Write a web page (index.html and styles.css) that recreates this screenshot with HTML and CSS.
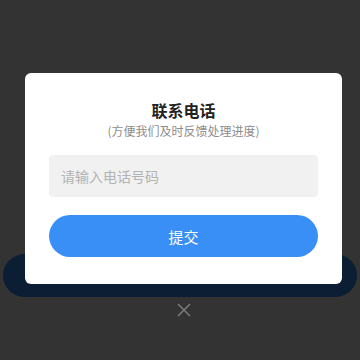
FILE: index.html
```html
<!DOCTYPE html>
<html lang="zh-CN">
<head>
  <meta charset="UTF-8">
  <meta name="viewport" content="width=device-width, initial-scale=1.0">
  <title>联系电话</title>
  <link rel="stylesheet" href="styles.css">
</head>
<body>
  <div class="page">
    <div class="page-bar"></div>
  </div>

  <div class="mask">
    <div class="dialog">
      <div class="dialog-title">联系电话</div>
      <div class="dialog-tip">(方便我们及时反馈处理进度)</div>
      <input class="phone-input" type="tel" placeholder="请输入电话号码">
      <button class="submit-btn">提交</button>
    </div>
    <button class="close-btn" aria-label="关闭">
      <svg width="14" height="14" viewBox="0 0 14 14">
        <path d="M1 1 L13 13 M13 1 L1 13" stroke="#7a7a7a" stroke-width="1.6" fill="none"/>
      </svg>
    </button>
  </div>
</body>
</html>
```

FILE: styles.css
```css
/* page */
body {
  margin: 0;
  background-color: #333333;
  font-family: "Noto Sans CJK SC", "Noto Sans", sans-serif;
  height: 360px;
  overflow: hidden;
  position: relative;
}

.page {
  padding: 254px 3px 0 3px;
}

.page-bar {
  height: 43px;
  border-radius: 22px;
  background-color: #0b1e34;
}

/* dialog */
.mask {
  position: absolute;
  top: 0;
  left: 0;
  right: 0;
  bottom: 0;
  display: flex;
  flex-direction: column;
  align-items: center;
  padding: 73px 0 0 7px;
}

.dialog {
  width: 317px;
  box-sizing: border-box;
  background-color: #fff;
  border-radius: 6px;
  padding: 26px 24px 27px;
  display: flex;
  flex-direction: column;
  align-items: center;
}

.dialog-title {
  font-size: 16px;
  line-height: 22px;
  font-weight: bold;
  color: #222;
}

.dialog-tip {
  margin-top: 2px;
  font-size: 12px;
  line-height: 16px;
  color: #8c8c8c;
}

.phone-input {
  margin-top: 16px;
  width: 100%;
  height: 42px;
  box-sizing: border-box;
  border: none;
  outline: none;
  border-radius: 4px;
  background-color: #f1f1f1;
  padding: 0 12px;
  font-family: inherit;
  font-size: 14px;
  color: #333;
}

.phone-input::placeholder {
  color: #b3b3b3;
}

.submit-btn {
  margin-top: 18px;
  width: 100%;
  height: 42px;
  border: none;
  border-radius: 21px;
  background-color: #3a8ff7;
  color: #fff;
  font-family: inherit;
  font-size: 15px;
  cursor: pointer;
}

.close-btn {
  margin-top: 19px;
  width: 14px;
  height: 14px;
  padding: 0;
  border: none;
  background: none;
  display: flex;
  cursor: pointer;
}
```
